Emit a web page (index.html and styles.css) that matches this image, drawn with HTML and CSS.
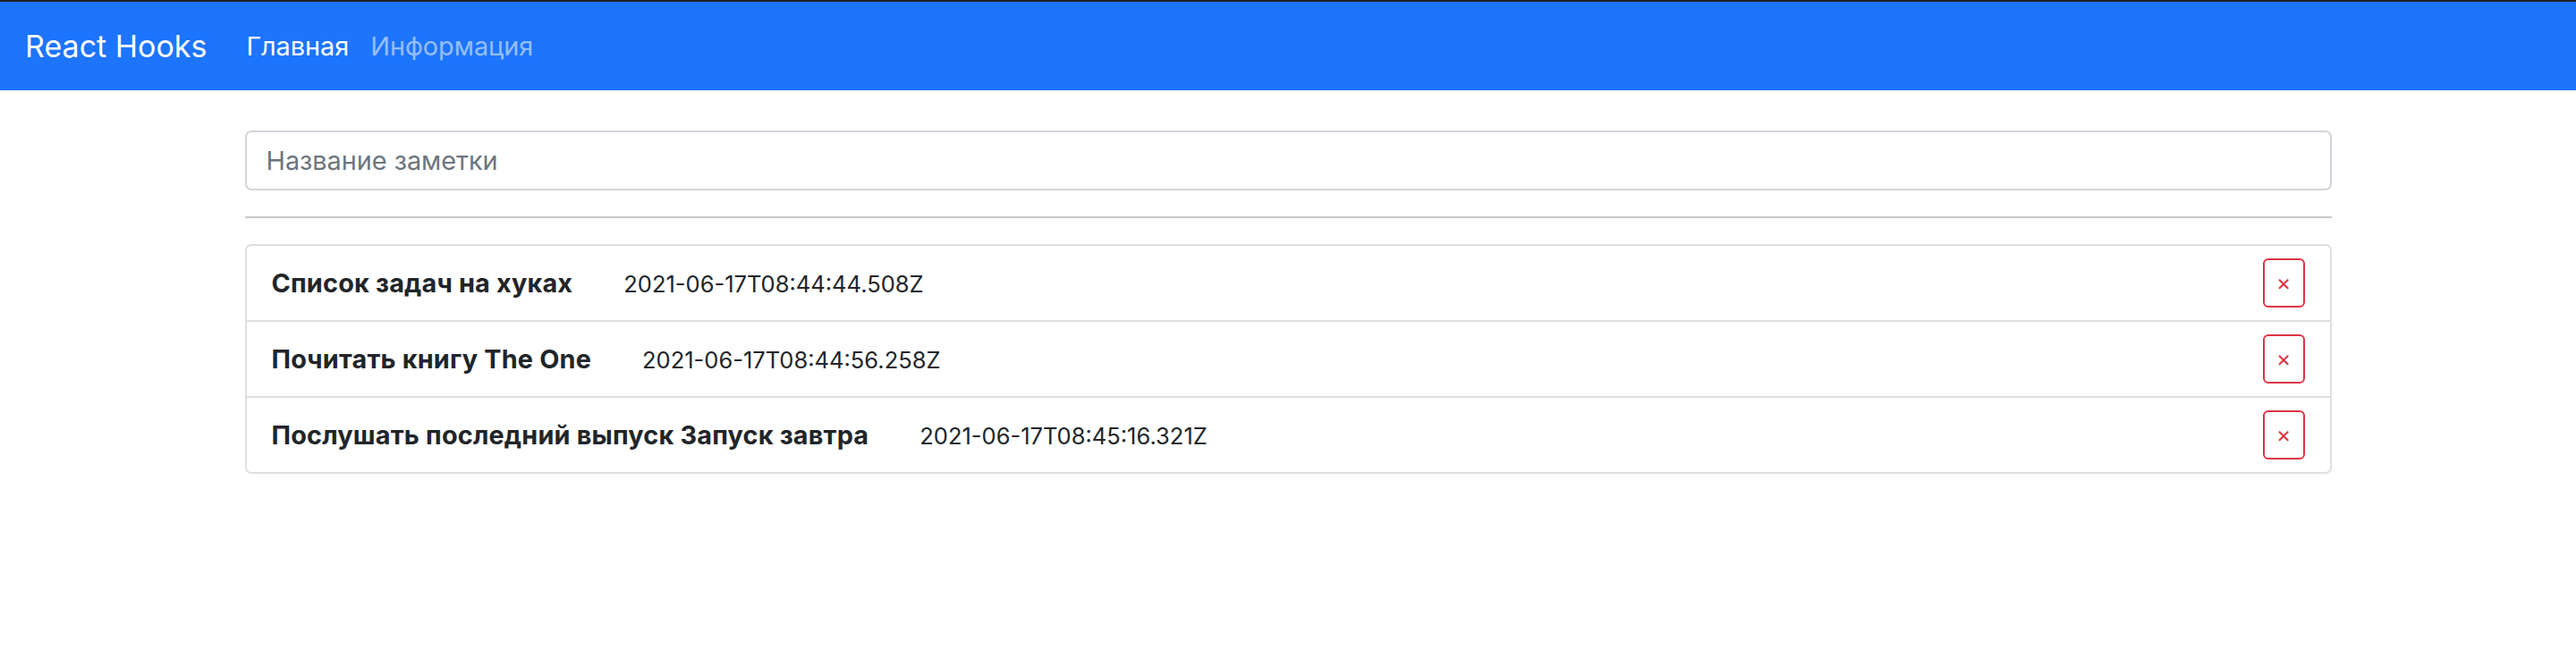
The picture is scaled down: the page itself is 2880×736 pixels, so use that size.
FILE: index.html
```html
<!DOCTYPE html>
<html lang="ru">
<head>
<meta charset="utf-8">
<title>React Hooks</title>
<link rel="stylesheet" href="styles.css">
</head>
<body>
<nav class="navbar">
  <a class="brand" href="#">React Hooks</a>
  <ul class="nav">
    <li><a class="nav-link active" href="#">Главная</a></li>
    <li><a class="nav-link" href="#">Информация</a></li>
  </ul>
</nav>
<main class="container">
  <form class="form">
    <input class="form-control" type="text" placeholder="Название заметки">
  </form>
  <hr class="divider">
  <ul class="list">
    <li class="list-item">
      <div class="note">
        <strong class="note-title">Список задач на хуках</strong>
        <small class="note-date">2021-06-17T08:44:44.508Z</small>
      </div>
      <button class="btn-delete" type="button">&times;</button>
    </li>
    <li class="list-item">
      <div class="note">
        <strong class="note-title">Почитать книгу The One</strong>
        <small class="note-date">2021-06-17T08:44:56.258Z</small>
      </div>
      <button class="btn-delete" type="button">&times;</button>
    </li>
    <li class="list-item">
      <div class="note">
        <strong class="note-title">Послушать последний выпуск Запуск завтра</strong>
        <small class="note-date">2021-06-17T08:45:16.321Z</small>
      </div>
      <button class="btn-delete" type="button">&times;</button>
    </li>
  </ul>
</main>
</body>
</html>
```

FILE: styles.css
```css
* {
  box-sizing: border-box;
}

html, body {
  margin: 0;
  padding: 0;
  background: #ffffff;
}

body {
  font-family: Inter, "Noto Sans", "Liberation Sans", sans-serif;
  font-size: 28.8px;
  line-height: 1.5;
  color: #212529;
}

.navbar {
  display: flex;
  align-items: center;
  height: 101px;
  border-top: 2px solid #1f2124;
  background: #1d74fd;
  padding: 0 28px;
}

.brand {
  font-size: 34px;
  color: #ffffff;
  text-decoration: none;
  margin-right: 32px;
}

.nav {
  display: flex;
  list-style: none;
  margin: 0;
  padding: 0;
}

.nav-link {
  display: block;
  padding: 0 12px;
  font-size: 28.8px;
  color: rgba(255, 255, 255, 0.55);
  text-decoration: none;
}

.nav-link.active {
  color: #ffffff;
}

.container {
  width: 2333px;
  margin: 0 auto;
  padding-top: 45px;
}

.form {
  margin: 0;
}

.form-control {
  display: block;
  width: 100%;
  height: 67px;
  padding: 0 22px;
  border: 2px solid #d1d5da;
  border-radius: 7px;
  font-family: inherit;
  font-size: 28.8px;
  color: #212529;
  background: #ffffff;
  outline: none;
}

.form-control::placeholder {
  color: #6c757d;
}

.divider {
  margin: 29px 0;
  border: 0;
  border-top: 2px solid #c8c9ca;
}

.list {
  list-style: none;
  margin: 0;
  padding: 0;
  border: 2px solid #dfdfdf;
  border-radius: 7px;
}

.list-item {
  display: flex;
  align-items: center;
  justify-content: space-between;
  padding: 14px 28px;
}

.list-item + .list-item {
  border-top: 2px solid #dfdfdf;
}

.note {
  display: flex;
  align-items: baseline;
  gap: 57px;
}

.note-title {
  font-weight: 700;
  letter-spacing: 0.2px;
}

.note-date {
  font-size: 25.5px;
}

.btn-delete {
  width: 47px;
  height: 55px;
  padding: 0;
  border: 2px solid #dc3545;
  border-radius: 6px;
  background: #ffffff;
  color: #dc3545;
  font-family: inherit;
  font-size: 25.2px;
  line-height: 1;
  cursor: pointer;
}
```
